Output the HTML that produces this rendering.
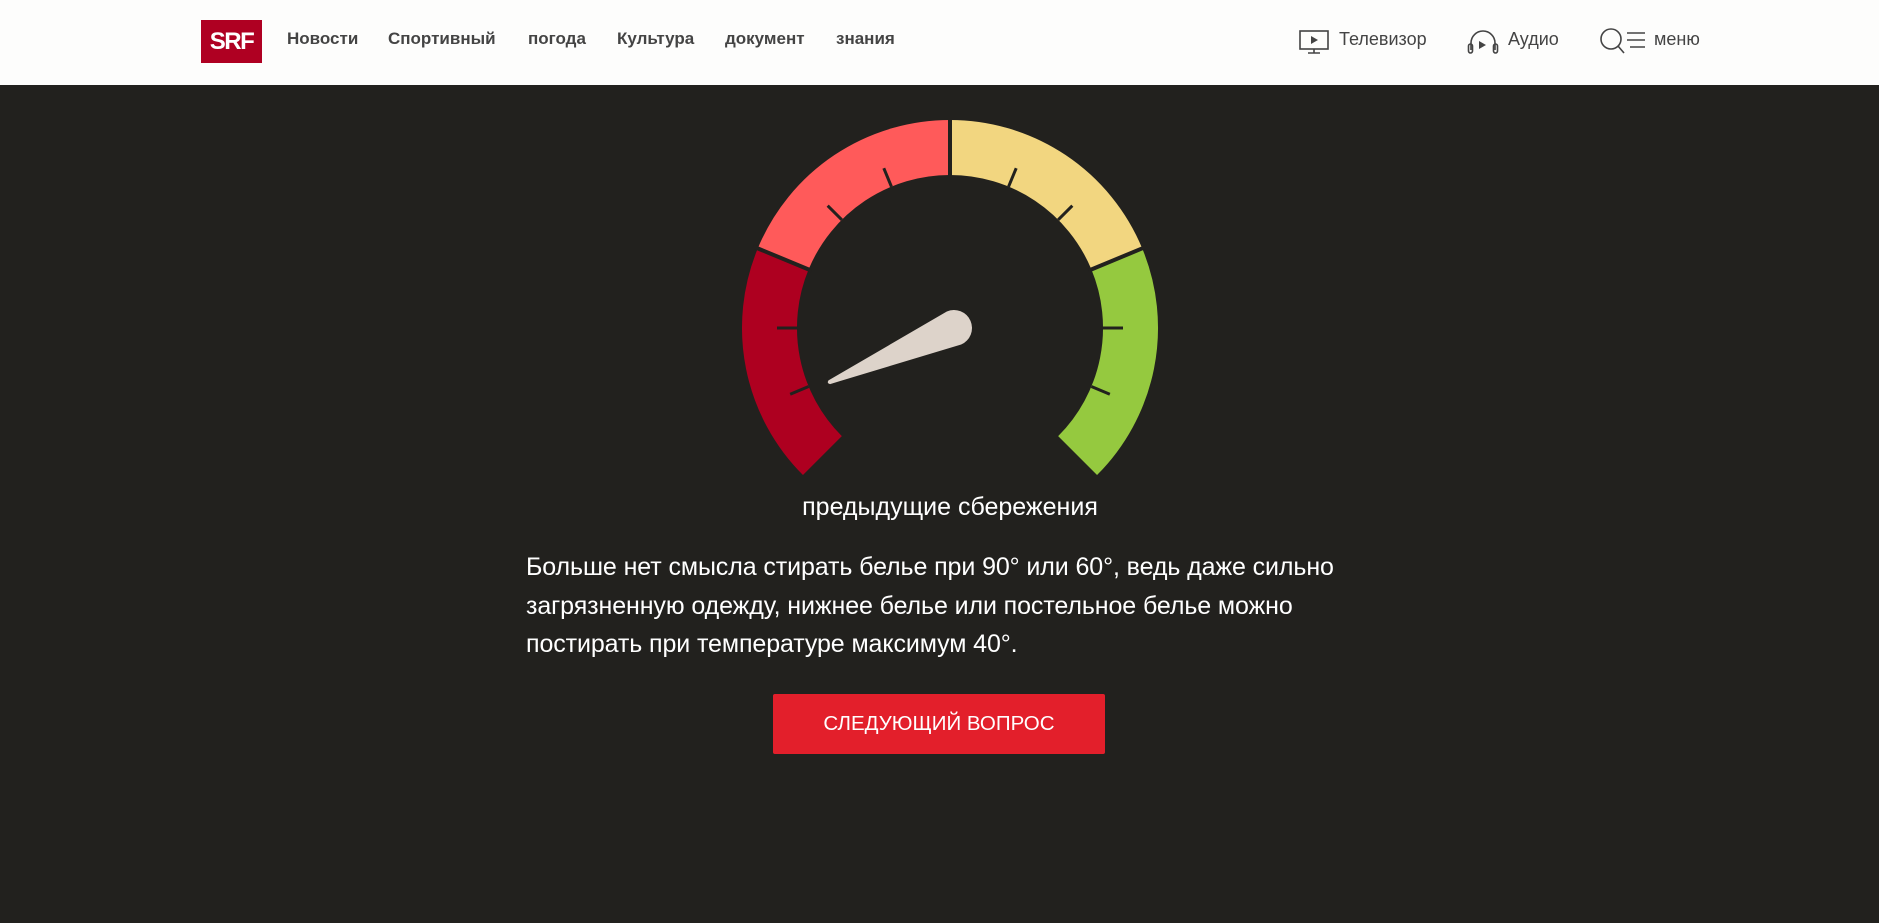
<!DOCTYPE html>
<html><head><meta charset="utf-8"><style>
*{margin:0;padding:0;box-sizing:border-box}
body{width:1879px;height:923px;background:#22211e;font-family:"Liberation Sans",sans-serif;overflow:hidden;position:relative}
.nav{position:absolute;left:0;top:0;width:1879px;height:85px;background:#fdfdfc}
.logo{position:absolute;left:201px;top:20px;width:61px;height:43px;background:#af0022;color:#fff;font:bold 24px "Liberation Sans",sans-serif;text-align:center;line-height:43px;letter-spacing:-1.5px}
.ni{position:absolute;top:29px;font-weight:bold;font-size:17px;color:#444}
.ri{position:absolute;top:29px;font-size:18px;color:#444}
.ic{position:absolute}
.t{position:absolute;color:#fff;font-family:"Liberation Sans",sans-serif}
</style></head><body>
<div class="nav">
<div class="logo">SRF</div>
<div class="ni" style="left:287px">Новости</div>
<div class="ni" style="left:388px">Спортивный</div>
<div class="ni" style="left:528px">погода</div>
<div class="ni" style="left:617px">Культура</div>
<div class="ni" style="left:725px">документ</div>
<div class="ni" style="left:836px">знания</div>
<svg class="ic" style="left:1299px;top:29px" width="32" height="28" viewBox="0 0 32 28" fill="none" stroke="#444" stroke-width="1.6"><rect x="1" y="2" width="28" height="18"/><path d="M9 24h12M15 20v4"/><path d="M12 7l7 4-7 4z" fill="#444" stroke="none"/></svg>
<div class="ri" style="left:1339px">Телевизор</div>
<svg class="ic" style="left:1467px;top:28px" width="32" height="28" viewBox="0 0 32 28" fill="none" stroke="#444" stroke-width="1.6"><path d="M4 22V15a12 12 0 0 1 24 0v7"/><rect x="1.5" y="16" width="4" height="9" rx="2"/><rect x="26.5" y="16" width="4" height="9" rx="2"/><path d="M12 13l7 4-7 4z" fill="#444" stroke="none"/></svg>
<div class="ri" style="left:1508px">Аудио</div>
<svg class="ic" style="left:1600px;top:27px" width="46" height="30" viewBox="0 0 46 30" fill="none" stroke="#444" stroke-width="1.6"><circle cx="11" cy="12" r="10"/><path d="M18 19l6 7"/><path d="M27 6h18M27 13h18M30 20h15"/></svg>
<div class="ri" style="left:1654px">меню</div>
</div>

<svg style="position:absolute;left:0;top:0" width="1879" height="923">
<g fill="none" stroke-width="55">
<path d="M822.4 455.6 A180.5 180.5 0 0 1 783.2 258.9" stroke="#ae0020"/>
<path d="M783.2 258.9 A180.5 180.5 0 0 1 950 147.5" stroke="#ff5a5a"/>
<path d="M950 147.5 A180.5 180.5 0 0 1 1116.8 258.9" stroke="#f2d680"/>
<path d="M1116.8 258.9 A180.5 180.5 0 0 1 1077.6 455.6" stroke="#95c93f"/>
</g>
<g stroke="#22211e" stroke-width="4">
<line x1="950" y1="178" x2="950" y2="115" transform="rotate(-67.5 950 328)"/>
<line x1="950" y1="178" x2="950" y2="115"/>
<line x1="950" y1="178" x2="950" y2="115" transform="rotate(67.5 950 328)"/>
</g>
<g stroke="#22211e" stroke-width="3">
<line x1="950" y1="175" x2="950" y2="155" transform="rotate(-112.5 950 328)"/>
<line x1="950" y1="175" x2="950" y2="155" transform="rotate(-90 950 328)"/>
<line x1="950" y1="175" x2="950" y2="155" transform="rotate(-45 950 328)"/>
<line x1="950" y1="175" x2="950" y2="155" transform="rotate(-22.5 950 328)"/>
<line x1="950" y1="175" x2="950" y2="155" transform="rotate(22.5 950 328)"/>
<line x1="950" y1="175" x2="950" y2="155" transform="rotate(45 950 328)"/>
<line x1="950" y1="175" x2="950" y2="155" transform="rotate(90 950 328)"/>
<line x1="950" y1="175" x2="950" y2="155" transform="rotate(112.5 950 328)"/>
</g>
<path d="M-18 0 L-2 -136 Q0 -139 2 -136 L18 0 A18 18 0 0 1 -18 0 Z" fill="#ddd3ca" transform="translate(954 328) rotate(-113.5)"/>
</svg>

<div class="t" style="left:0;width:1900px;text-align:center;top:493px;font-size:25px">предыдущие сбережения</div>
<div class="t" style="left:526px;top:548px;width:1000px;font-size:25px;line-height:38.5px;white-space:nowrap;letter-spacing:-0.1px">Больше нет смысла стирать белье при 90° или 60°, ведь даже сильно<br>загрязненную одежду, нижнее белье или постельное белье можно<br>постирать при температуре максимум 40°.</div>
<div style="position:absolute;left:773px;top:694px;width:332px;height:60px;background:#e31f2b;border-radius:2px;color:#fff;font:20.5px 'Liberation Sans',sans-serif;text-align:center;line-height:60px">СЛЕДУЮЩИЙ ВОПРОС</div>
</body></html>
